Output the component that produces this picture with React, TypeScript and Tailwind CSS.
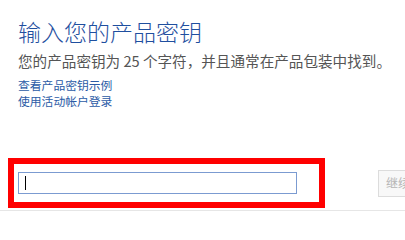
export default function App() {
  return (
    <div
      className="w-[405px] h-[225px] bg-white overflow-hidden"
      style={{ fontFamily: '"Noto Sans CJK SC", "Liberation Sans", sans-serif' }}
    >
      <div className="pl-[18px] pt-[16px]">
        <h1 className="text-[23px] leading-[30px] font-light text-[#1f4f9f]">
          输入您的产品密钥
        </h1>
        <p className="mt-[6px] text-[14.6px] leading-[18px] text-[#555555] whitespace-nowrap">
          您的产品密钥为 25 个字符，并且通常在产品包装中找到。
        </p>
        <div className="mt-[7px] flex flex-col gap-px text-[11.8px] leading-[15px] text-[#2b5ba6]">
          <a href="#">查看产品密钥示例</a>
          <a href="#">使用活动帐户登录</a>
        </div>
      </div>

      <div className="mt-[50px] flex items-center">
        <div className="shrink-0 ml-[8px] w-[317px] h-[50px] border-[6px] border-[#ff0000] flex items-center pl-[4px]">
          <div className="relative w-[279px] h-[22px] border border-[#7b9bd1] bg-white">
            <span className="absolute left-[6px] top-[3px] w-px h-[14px] bg-black" />
          </div>
        </div>
        <button className="shrink-0 ml-[53px] h-[27px] px-[7px] border border-[#dcdcdc] bg-[#f8f8f8] text-[12px] text-[#b5b5b5] whitespace-nowrap">
          继续
        </button>
      </div>
      <div className="mt-[2px] h-px bg-[#e6e6e6]" />
    </div>
  );
}
